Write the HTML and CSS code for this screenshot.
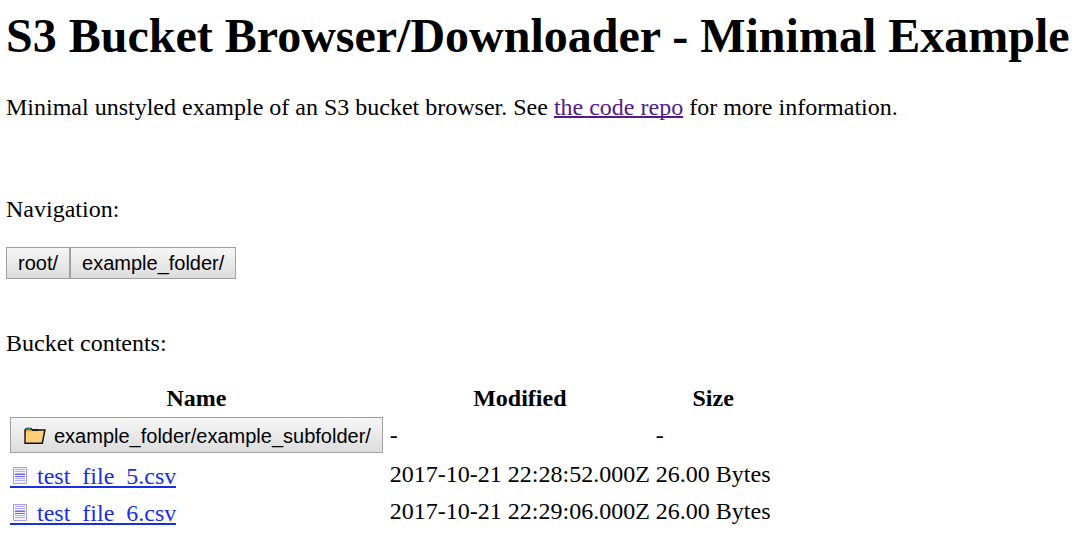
FILE: index.html
```html
<!DOCTYPE html>
<html lang="en">
<head>
<meta charset="utf-8">
<title>S3 Bucket Browser/Downloader - Minimal Example</title>
<link rel="stylesheet" href="styles.css">
</head>
<body class="page">
<svg class="symbols" aria-hidden="true">
  <symbol id="file" viewBox="0 0 14 17">
    <path d="M.5.5h13v16H.5z" fill="#f3f2fa" stroke="#a79bea"/>
    <path d="M2 2.5h10M2 4.5h10M2 6.5h10M2 11.5h10M2 13.5h10" stroke="#b0b0ee"/>
    <path d="M2 7.5h10M2 9.5h10" stroke="#6f6be6"/>
  </symbol>
</svg>
<h1 class="title">S3 Bucket Browser/Downloader - Minimal Example</h1>
<p class="intro">Minimal unstyled example of an S3 bucket browser. See <a class="repo-link" href="#repo">the code repo</a> for more information.</p>
<p class="label">Navigation:</p>
<nav class="crumbs">
  <button class="button" type="button">root/</button>
  <button class="button" type="button">example_folder/</button>
</nav>
<p class="label">Bucket contents:</p>
<table class="listing">
  <thead>
    <tr><th class="name">Name</th><th>Modified</th><th>Size</th></tr>
  </thead>
  <tbody>
    <tr>
      <td class="name"><button class="button folder-button" type="button"><svg class="folder-icon" viewBox="0 0 22 18" aria-hidden="true"><path d="M1 16.3V3L2.5 1.5h4.3L8.5 3h6v13.3z" fill="#e5a039" stroke="#111" stroke-width="1.4"/><path d="M2 1.8h5" stroke="#28708c" stroke-width="1.6"/><path d="M2 5.5l1.5-1.2h9.3L14.5 2.8h6.3l-2.5 13.4H1.8z" fill="#ffcf78"/><path d="M8.5 2.9h12.4l-2.6 13.4H1" fill="none" stroke="#111" stroke-width="1.5"/></svg>example_folder/example_subfolder/</button></td>
      <td>-</td><td>-</td>
    </tr>
    <tr class="file-row">
      <td class="name"><a class="file-link" href="#5"><svg class="file-icon" aria-hidden="true"><use href="#file"/></svg>test_file_5.csv</a></td>
      <td>2017-10-21 22:28:52.000Z</td><td>26.00 Bytes</td>
    </tr>
    <tr class="file-row">
      <td class="name"><a class="file-link" href="#6"><svg class="file-icon" aria-hidden="true"><use href="#file"/></svg>test_file_6.csv</a></td>
      <td>2017-10-21 22:29:06.000Z</td><td>26.00 Bytes</td>
    </tr>
  </tbody>
</table>
</body>
</html>
```
FILE: styles.css
```css
.page {
  margin: 8px 6px;
  background: #fff;
  color: #000;
  font: 24px/28px "Liberation Serif", "Times New Roman", serif;
}
.symbols { display: none; }
.title {
  margin: 0 0 29px;
  font-size: 48px;
  line-height: 56px;
  font-weight: bold;
}
.intro { margin: 0 0 74px; }
.repo-link {
  color: #551a8b;
  text-decoration-thickness: 2px;
  text-decoration-skip-ink: none;
}
.label { margin: 0 0 24px; }
.crumbs {
  display: flex;
  margin-bottom: 50px;
}
.button {
  box-sizing: border-box;
  height: 32px;
  padding: 0 11px;
  border: 1px solid #a0a0a0;
  border-radius: 0;
  background: linear-gradient(#f6f6f6, #dddddd);
  color: #000;
  font: 20px/24px "Liberation Sans", Arial, sans-serif;
}
.listing { border-spacing: 2px; }
.listing th,
.listing td {
  padding: 2px;
  text-align: left;
  white-space: nowrap;
}
.listing th {
  padding: 1px 2px;
  text-align: center;
}
.listing .name { padding-right: 3px; }
.listing .file-row { height: 35px; }
.listing .file-row td { padding: 0 2px 2px; }
.folder-button {
  display: flex;
  align-items: center;
  gap: 8px;
  height: 36px;
  padding: 2px 11px 0 13px;
}
.folder-icon {
  width: 22px;
  height: 18px;
}
.file-link {
  display: block;
  width: fit-content;
  margin-top: 7px;
  border-bottom: 2px solid #1a2ee8;
  color: #1a2ee8;
  line-height: 20px;
  text-decoration: none;
}
.file-icon {
  width: 14px;
  height: 17px;
  margin: 0 10px 0 3px;
}
```
